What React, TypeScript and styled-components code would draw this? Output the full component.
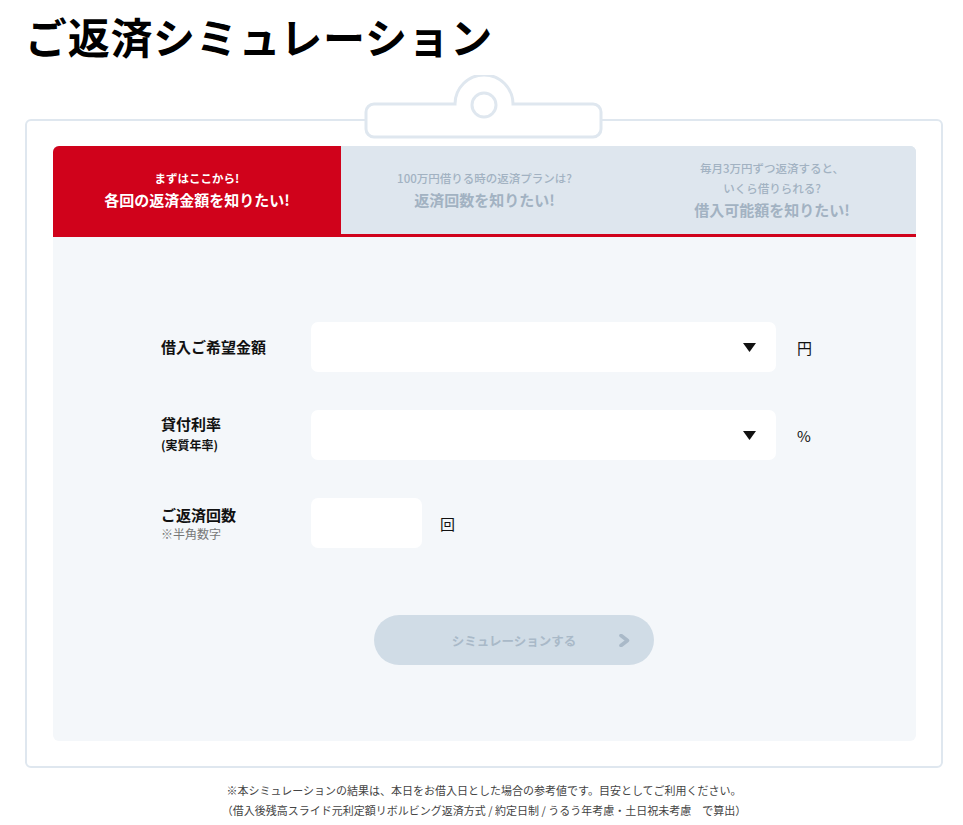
import React from 'react';
import styled, {createGlobalStyle} from 'styled-components';

const GlobalStyle = createGlobalStyle`
  html, body {
    margin: 0;
    padding: 0;
    background: #ffffff;
    font-family: "Noto Sans CJK JP", "Noto Sans", sans-serif;
    color: #111;
  }
`

const tabs = [
    {lead: ['まずはここから!'], title: '各回の返済金額を知りたい!'},
    {lead: ['100万円借りる時の返済プランは?'], title: '返済回数を知りたい!'},
    {lead: ['毎月3万円ずつ返済すると、', 'いくら借りられる?'], title: '借入可能額を知りたい!'},
]

const ArrowDown = () => (
    <svg width="13" height="9" viewBox="0 0 13 9">
        <polygon points="0,0 13,0 6.5,9" fill="#111"/>
    </svg>
)

const Chevron = () => (
    <svg width="11" height="13" viewBox="0 0 11 13">
        <path d="M2 1.5 L8.5 6.5 L2 11.5" fill="none" stroke="#a9b9c8" strokeWidth="3.6" strokeLinejoin="round"
              strokeLinecap="round"/>
    </svg>
)

const Clip = () => (
    <svg width="240" height="66" viewBox="0 0 240 66">
        <path
            d="M10 29 H91 A29 29 0 0 1 149 29 H229 A8 8 0 0 1 237 37 V54 A8 8 0 0 1 229 62 H10 A8 8 0 0 1 2 54 V37 A8 8 0 0 1 10 29 Z"
            fill="#ffffff" stroke="#dfe7ef" strokeWidth="3"/>
        <circle cx="120" cy="30" r="12" fill="#ffffff" stroke="#dfe7ef" strokeWidth="3"/>
    </svg>
)

export default function App() {
    return (
        <Page>
            <GlobalStyle/>
            <Title>ご返済シミュレーション</Title>

            <Card>
                <ClipHolder><Clip/></ClipHolder>
                <Panel>
                    <TabBar>
                        {tabs.map((t, i) => (
                            <Tab key={i} active={i === 0}>
                                {t.lead.map(l => <TabLead key={l} active={i === 0}>{l}</TabLead>)}
                                <TabTitle>{t.title}</TabTitle>
                            </Tab>
                        ))}
                    </TabBar>

                    <Form>
                        <Row>
                            <Label>
                                <LabelMain>借入ご希望金額</LabelMain>
                            </Label>
                            <SelectBox>
                                <ArrowDown/>
                            </SelectBox>
                            <Unit>円</Unit>
                        </Row>

                        <Row>
                            <Label>
                                <LabelMain>貸付利率</LabelMain>
                                <LabelSub>(実質年率)</LabelSub>
                            </Label>
                            <SelectBox>
                                <ArrowDown/>
                            </SelectBox>
                            <Unit>%</Unit>
                        </Row>

                        <Row>
                            <Label>
                                <LabelMain>ご返済回数</LabelMain>
                                <LabelNote>※半角数字</LabelNote>
                            </Label>
                            <CountInput type="text"/>
                            <Unit small>回</Unit>
                        </Row>

                        <SubmitButton disabled>
                            シミュレーションする
                            <ChevronSpot><Chevron/></ChevronSpot>
                        </SubmitButton>
                    </Form>
                </Panel>
            </Card>

            <Footer>
                <p>※本シミュレーションの結果は、本日をお借入日とした場合の参考値です。目安としてご利用ください。</p>
                <p>（借入後残高スライド元利定額リボルビング返済方式 / 約定日制 / うるう年考慮・土日祝未考慮　で算出）</p>
            </Footer>
        </Page>
    )
}

const Page = styled.div`
  width: 918px;
  padding-left: 25px;
  padding-bottom: 20px;
`
const Title = styled.h1`
  margin: 0;
  padding-top: 6px;
  font-size: 42px;
  line-height: 60px;
  font-weight: 700;
  letter-spacing: 0.7px;
  color: #000;
`
const Card = styled.div`
  position: relative;
  margin-top: 53px;
  border: 2px solid #dfe7ef;
  border-radius: 6px;
  padding: 25px 25px 25px 26px;
  background: #fff;
`
const ClipHolder = styled.div`
  position: absolute;
  top: -46px;
  left: 50%;
  margin-left: -120px;
  line-height: 0;
`
const Panel = styled.div`
  background: #f4f7fa;
  border-radius: 6px;
  overflow: hidden;
`
const TabBar = styled.div`
  display: grid;
  grid-template-columns: 288px 1fr 288px;
  border-bottom: 3px solid #d0021b;
  background: #dee6ee;
`
const Tab = styled.div<{ active?: boolean }>`
  height: 88px;
  display: flex;
  flex-direction: column;
  align-items: center;
  justify-content: center;
  text-align: center;
  background: ${p => p.active ? '#d0021b' : '#dee6ee'};
  color: ${p => p.active ? '#ffffff' : '#a2b2c2'};
`
const TabLead = styled.div<{ active?: boolean }>`
  font-size: 11.5px;
  line-height: 20px;
  font-weight: ${p => p.active ? 700 : 500};
`
const TabTitle = styled.div`
  font-size: 15px;
  line-height: 24px;
  font-weight: 700;
`
const Form = styled.div`
  width: 706px;
  margin-left: 108px;
  padding: 85px 0 76px;
  display: flex;
  flex-direction: column;
  gap: 38px;
`
const Row = styled.div`
  display: flex;
  align-items: center;
  height: 50px;
`
const Label = styled.div`
  width: 150px;
  flex-shrink: 0;
  display: flex;
  flex-direction: column;
`
const LabelMain = styled.div`
  font-size: 15px;
  line-height: 20px;
  font-weight: 700;
  color: #111;
`
const LabelSub = styled.div`
  font-size: 12px;
  line-height: 22px;
  font-weight: 700;
  color: #111;
`
const LabelNote = styled.div`
  font-size: 12px;
  line-height: 17px;
  color: #777;
`
const SelectBox = styled.div`
  width: 465px;
  height: 50px;
  box-sizing: border-box;
  background: #fff;
  border-radius: 7px;
  display: flex;
  align-items: center;
  justify-content: flex-end;
  padding-right: 20px;
`
const CountInput = styled.input`
  width: 111px;
  height: 50px;
  box-sizing: border-box;
  border: none;
  border-radius: 7px;
  background: #fff;
  outline: none;
`
const Unit = styled.span<{ small?: boolean }>`
  margin-left: ${p => p.small ? '18px' : '21px'};
  font-size: 15px;
  color: #111;
`
const SubmitButton = styled.button`
  position: relative;
  align-self: center;
  margin-top: 29px;
  width: 280px;
  height: 50px;
  border: none;
  border-radius: 25px;
  background: #d0dce6;
  color: #a9b9c8;
  font-family: inherit;
  font-size: 12.5px;
  font-weight: 700;
  cursor: default;
`
const ChevronSpot = styled.span`
  position: absolute;
  right: 24px;
  top: 19px;
  line-height: 0;
`
const Footer = styled.div`
  margin-top: 12px;
  text-align: center;
  font-size: 11px;
  line-height: 20px;
  color: #444;

  p {
    margin: 0;
  }
`
